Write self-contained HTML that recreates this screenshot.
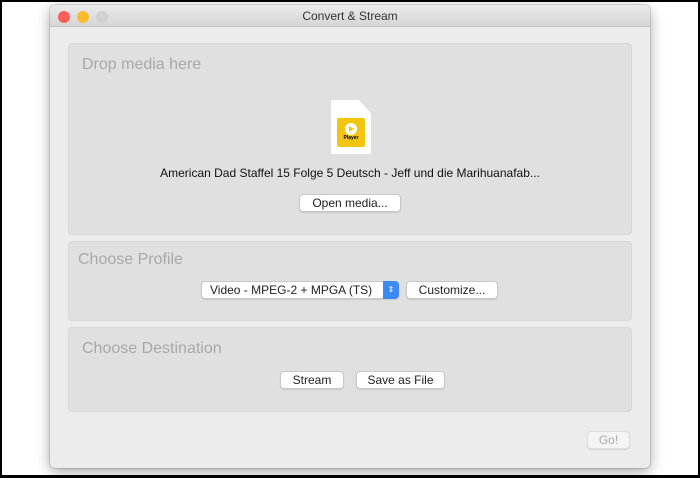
<!DOCTYPE html>
<html><head><style>
*{margin:0;padding:0;box-sizing:border-box}
body{width:700px;height:478px;background:#000;position:relative;overflow:hidden;font-family:"Liberation Sans",sans-serif}
.bg{position:absolute;left:2px;top:2px;width:696px;height:473px;background:#fff}
.win{position:absolute;left:50px;top:5px;width:600px;height:463px;background:#ececec;border-radius:5px;box-shadow:0 4px 14px rgba(0,0,0,.35),0 0 0 1px rgba(0,0,0,.12);overflow:hidden}
.tb{height:22px;background:linear-gradient(#ebebeb,#d6d6d6);border-bottom:1px solid #c4c4c4;text-align:center;font-size:12px;line-height:22px;color:#333}
.dot{position:absolute;top:6px;width:12px;height:12px;border-radius:50%}
.panel{position:absolute;left:18px;width:564px;background:#e0e0e0;border-radius:4px;border:1px solid #d8d8d8}
.lbl{position:absolute;left:13px;font-size:16px;color:#a8a8a8}
.btn{position:absolute;height:18px;background:#fff;border:1px solid #c8c8c8;border-radius:4px;font-size:12px;line-height:16px;text-align:center;color:#222;box-shadow:0 1px 1px rgba(0,0,0,.1)}
</style></head><body>
<div class="bg"></div>
<div class="win">
<div class="tb">Convert &amp; Stream</div>
<div class="dot" style="left:8px;background:#fc5f57"></div>
<div class="dot" style="left:27px;background:#fdbc2e"></div>
<div class="dot" style="left:46px;background:#d0d0d0"></div>
<div class="panel" style="top:38px;height:192px">
<div class="lbl" style="top:12px">Drop media here</div>
<div style="position:absolute;left:262px;top:56px;width:40px;height:54px;background:#fff;clip-path:polygon(0 0,70% 0,100% 25%,100% 100%,0 100%);box-shadow:0 1px 2px #999"></div>
<div style="position:absolute;left:268px;top:74px;width:28px;height:29px;background:#f2c511;border-radius:2px"><div style="margin:5px auto 0;width:12px;height:12px;border-radius:50%;background:#fff;position:relative"><div style="position:absolute;left:4px;top:3px;border-left:5px solid #f2c511;border-top:3px solid transparent;border-bottom:3px solid transparent"></div></div><div style="font-size:5px;text-align:center;font-weight:bold">Player</div></div>
<div style="position:absolute;left:0;width:100%;top:122px;text-align:center;font-size:12px;color:#111">American Dad Staffel 15 Folge 5 Deutsch - Jeff und die Marihuanafab...</div>
<div class="btn" style="left:230px;top:150px;width:102px">Open media...</div>
</div>
<div class="panel" style="top:236px;height:80px">
<div class="lbl" style="left:9px;top:9px">Choose Profile</div>
<div class="btn" style="left:132px;top:39px;width:198px;text-align:left;padding-left:8px">Video - MPEG-2 + MPGA (TS)<div style="position:absolute;right:-1px;top:-1px;width:16px;height:18px;background:#3b8af5;border-radius:0 4px 4px 0;color:#fff;font-size:8px;line-height:18px;text-align:center">⇕</div></div>
<div class="btn" style="left:337px;top:39px;width:92px">Customize...</div>
</div>
<div class="panel" style="top:322px;height:85px">
<div class="lbl" style="top:12px">Choose Destination</div>
<div class="btn" style="left:211px;top:43px;width:64px">Stream</div>
<div class="btn" style="left:287px;top:43px;width:89px">Save as File</div>
</div>
<div class="btn" style="left:537px;top:426px;width:43px;color:#aaa;background:#f4f4f4;border-color:#ddd">Go!</div>
</div>
</body></html>
